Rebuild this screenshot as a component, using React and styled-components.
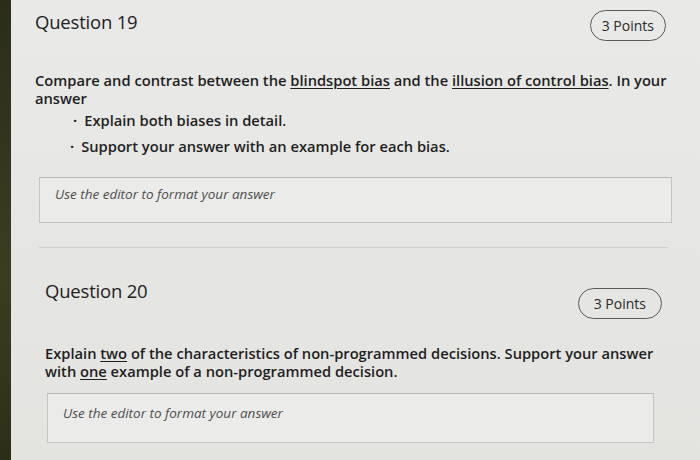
import React from 'react'
import styled, { createGlobalStyle } from 'styled-components'

const GlobalStyle = createGlobalStyle`
  html, body {
    margin: 0;
    padding: 0;
    background: #e4e4e1;
    font-family: "Open Sans", "Liberation Sans", sans-serif;
    color: #1f1f1f;
  }
`

const Screen = styled.div`
  display: flex;
  width: 700px;
  height: 460px;
  overflow: hidden;
`

const Bezel = styled.div`
  width: 11px;
  flex-shrink: 0;
  background: linear-gradient(to bottom, #2b2c1c, #3b3d22 60%, #2c2e18);
`

const Page = styled.div`
  flex: 1;
  display: flex;
  flex-direction: column;
  background: linear-gradient(to bottom, #e9e9e7, #e3e3e0);
`

const Question = styled.section`
  display: flex;
  flex-direction: column;
  padding: ${({ $top }) => $top}px ${({ $right }) => $right}px 0 ${({ $left }) => $left}px;
`

const Header = styled.div`
  display: flex;
  justify-content: space-between;
  align-items: flex-start;
`

const Title = styled.h2`
  margin: ${({ $offset }) => $offset}px 0 0;
  font-size: 18.5px;
  font-weight: 400;
  color: #222;
  letter-spacing: -0.2px;
`

const Points = styled.div`
  height: ${({ $h }) => $h}px;
  padding: 0 ${({ $pad }) => $pad}px;
  border: 1.5px solid #5a5a5a;
  border-radius: 16px;
  display: flex;
  align-items: center;
  font-size: 14px;
  color: #2a2a2a;
  margin: ${({ $offset }) => $offset}px ${({ $right }) => $right}px 0 0;
`

const Prompt = styled.div`
  margin-top: ${({ $gap }) => $gap}px;
  max-width: ${({ $max }) => $max}px;
  font-size: 14.7px;
  font-weight: 600;
  line-height: 17.5px;
  color: #1e1e1e;

  u {
    text-decoration-thickness: 1px;
    text-underline-offset: 2px;
  }
`

const Bullets = styled.ul`
  margin: 4px 0 0;
  padding-left: 38px;
  list-style: none;
  display: flex;
  flex-direction: column;
  gap: 8px;
`

const Bullet = styled.li`
  display: flex;
  gap: 7px;
  font-size: 14.7px;
  font-weight: 600;
  line-height: 18px;
  margin-left: ${({ $shift }) => $shift}px;

  &::before {
    content: "·";
    font-weight: 700;
  }
`

const AnswerBox = styled.div`
  margin: ${({ $top }) => $top}px ${({ $inset }) => $inset}px 0 ${({ $indent }) => $indent}px;
  height: ${({ $height }) => $height}px;
  box-sizing: border-box;
  border: 1px solid #c4c4c1;
  border-top-color: #b9b9b6;
  background: #ebebe9;
  padding: ${({ $pad }) => $pad}px 0 0 15px;
  font-size: 13.5px;
  font-style: italic;
  color: #4e4e4e;
`

const Divider = styled.hr`
  margin: 24px 2px 0 4px;
  border: none;
  border-top: 1px solid #cfcfcc;
`

export default function App() {
  return (
    <>
      <GlobalStyle />
      <Screen>
        <Bezel />
        <Page>
          <Question $top={8} $right={30} $left={24}>
            <Header>
              <Title $offset={1}>Question 19</Title>
              <Points $offset={2} $right={4} $h={29} $pad={11}>3 Points</Points>
            </Header>
            <Prompt $gap={31} $max={640}>
              Compare and contrast between the <u>blindspot bias</u> and the{' '}
              <u>illusion of control bias</u>. In your answer
            </Prompt>
            <Bullets>
              <Bullet $shift={0}>Explain both biases in detail.</Bullet>
              <Bullet $shift={-3}>Support your answer with an example for each bias.</Bullet>
            </Bullets>
            <AnswerBox $top={22} $inset={-2} $indent={4} $height={46} $pad={7}>
              Use the editor to format your answer
            </AnswerBox>
            <Divider />
          </Question>

          <Question $top={34} $right={38} $left={34}>
            <Header>
              <Title $offset={-4}>Question 20</Title>
              <Points $offset={6} $right={0} $h={29} $pad={15}>3 Points</Points>
            </Header>
            <Prompt $gap={26} $max={630}>
              Explain <u>two</u> of the characteristics of non-programmed decisions. Support your answer
              with <u>one</u> example of a non-programmed decision.
            </Prompt>
            <AnswerBox $top={13} $inset={8} $indent={2} $height={50} $pad={10}>
              Use the editor to format your answer
            </AnswerBox>
          </Question>
        </Page>
      </Screen>
    </>
  )
}
